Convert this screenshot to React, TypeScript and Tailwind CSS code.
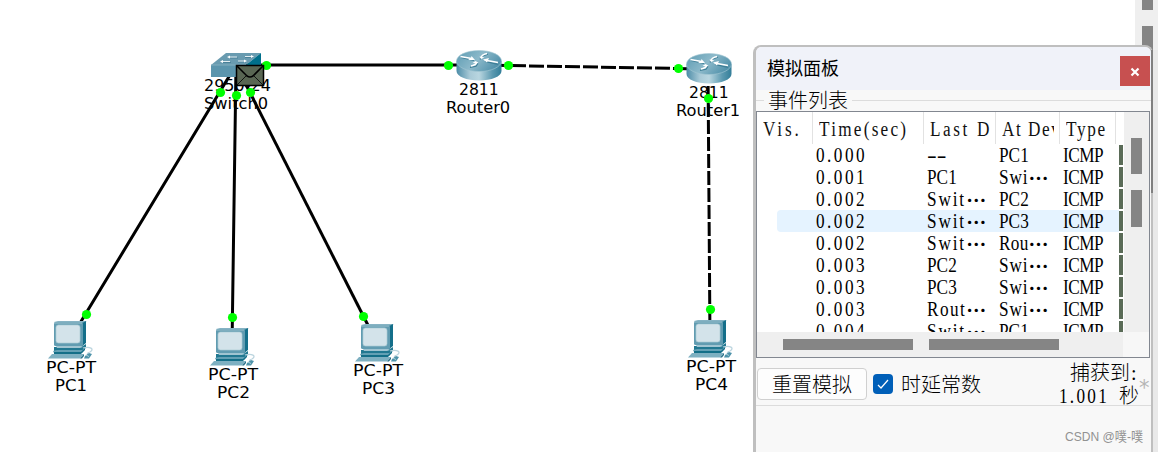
import { useLayoutEffect, useRef, useState } from "react";

/** Text squeezed or stretched horizontally so that it takes exactly `w` pixels. */
function Fit({ text, w, className = "" }: { text: string; w: number; className?: string }) {
  const ref = useRef<HTMLSpanElement>(null);
  const [scale, setScale] = useState(1);
  useLayoutEffect(() => {
    if (ref.current) setScale(w / ref.current.offsetWidth);
  }, [text, w]);
  return (
    <span className={`inline-block whitespace-pre text-left ${className}`} style={{ width: w }}>
      <span ref={ref} className="inline-block origin-left" style={{ transform: `scaleX(${scale})` }}>
        {text}
      </span>
    </span>
  );
}

const NARROW = 0.86;

/** Narrow serif text, letter-spaced so that it takes `w` pixels. */
function Spaced({ text, w }: { text: string; w: number }) {
  const ref = useRef<HTMLSpanElement>(null);
  const [spacing, setSpacing] = useState(0);
  useLayoutEffect(() => {
    if (!ref.current) return;
    ref.current.style.letterSpacing = "0px";
    const next = (w / NARROW - ref.current.offsetWidth) / text.length;
    ref.current.style.letterSpacing = `${next}px`;
    setSpacing(next);
  }, [text, w]);
  return (
    <span className="inline-block whitespace-pre text-left" style={{ width: w }}>
      <span
        ref={ref}
        className="inline-block origin-left"
        style={{ transform: `scaleX(${NARROW})`, letterSpacing: spacing }}
      >
        {text}
      </span>
    </span>
  );
}

function Router() {
  return (
    <svg width="46" height="32" viewBox="0 0 46 32" className="block">
      <defs>
        <linearGradient id="side" x1="0" x2="1">
          <stop offset="0" stopColor="#4d8da8" />
          <stop offset=".3" stopColor="#a9cad7" />
          <stop offset=".5" stopColor="#b9d6e0" />
          <stop offset=".8" stopColor="#5b99b0" />
          <stop offset="1" stopColor="#337e99" />
        </linearGradient>
        <linearGradient id="top" x1="0" x2="1" y2=".4">
          <stop offset="0" stopColor="#5d9bb2" />
          <stop offset=".55" stopColor="#8cb9ca" />
          <stop offset="1" stopColor="#5594ad" />
        </linearGradient>
      </defs>
      <path d="M.5 11v10c0 5.500 10 9.500 22.500 9.500s22.500-4 22.500-9.500V11z" fill="url(#side)" />
      <ellipse cx="23" cy="11" rx="22.500" ry="10.500" fill="url(#top)" stroke="#a5c8d4" strokeWidth=".6" />
      <g fill="none" stroke="#3f7f97" strokeWidth="1.200" transform="translate(0 1.300)">
        <path d="M5 6l13 3M42 13l-13-3M24 8l2-3 6-2M22 12l-2 3-6 1" />
      </g>
      <g fill="none" stroke="#fff" strokeWidth="1.700">
        <path d="M4.500 6.500l11 2M42 12.500l-11-2M25 7.500q1-3 6-4M21 12q-1 3-6 4" />
      </g>
      <path d="M12 10h7l-3.500-4-.5 2zM33 8l-6 1.500 4 3zM23.500 6.500l1.500 2.500 3.500-1.500zM22.500 13l-3-2-3 2z" fill="#fff" />
    </svg>
  );
}

function Switch() {
  return (
    <svg width="50" height="24" viewBox="0 0 50 24" className="block">
      <path d="M0 12L15 0h35L35 12z" fill="#699bb0" />
      <path d="M0 12h35v12H0z" fill="#5b95ad" />
      <path d="M35 12L50 0v12L35 24z" fill="#006f8b" />
      <path d="M0 12h35" stroke="#83afc0" strokeWidth="1" />
      <g stroke="#4a8198" strokeWidth="1" fill="none">
        <path d="M19 5h8M34 4.500h8M12 9.500h8M27 9h8" />
      </g>
      <g stroke="#e3eef2" strokeWidth="1.100" fill="none">
        <path d="M19 4h7M34 3.500h7M12 8.500h7M27 8h7" />
      </g>
      <path d="M16 4l3-1.500v3zM43 3.500L40 2v3zM9 8.500L12 7v3zM36 8l-3-1.500v3z" fill="#fff" />
    </svg>
  );
}

function Computer() {
  return (
    <svg width="46" height="38" viewBox="0 0 46 38" className="block">
      <path d="M6 1L10 0h29l-4 2z" fill="#86b3c4" />
      <path d="M34 2l4-2v22l-5 4z" fill="#146f8a" />
      <rect x="6" y="1" width="29" height="24" rx="1.500" fill="#619cb1" />
      <path d="M6 2h28" stroke="#9bc0cd" />
      <rect x="8" y="4" width="24" height="18" rx="2.500" fill="#d3e3ea" stroke="#adcbd6" strokeWidth=".7" />
      <path d="M6 26h27l5-3v4l-5 3H6z" fill="#217891" />
      <path d="M8 25h25l2 1-3 1H9z" fill="#a0c4d1" />
      <path d="M5 30l4-1h25l3-1-3 4H6z" fill="#63a0b4" />
      <path d="M6 31h27l4-4v2l-4 4H6z" fill="#146f88" />
      <path d="M4 33h32l-4 4.500H0z" fill="#7eb0c1" />
      <path d="M32 37.500l4-4.500v2l-2 2.500z" fill="#276f88" />
      <path d="M35 27c7-2 12 1 7 4-3 1-3 2-2 3" fill="none" stroke="#bcd5df" strokeWidth="1.300" />
      <path d="M37 35l4-3 3 1-3 4.500h-5z" fill="#4e93aa" />
      <path d="M38 34l3 1.500" stroke="#c7dfe5" strokeWidth=".8" />
    </svg>
  );
}

const LABEL = "font-['DejaVu_Sans'] text-[16px] leading-[18px] text-black";

const computers = [
  { name: "PC1", x: 48, y: 321, lx: 46, ly: 359, w: 32 },
  { name: "PC2", x: 210, y: 328, lx: 208, ly: 366, w: 33 },
  { name: "PC3", x: 355, y: 324, lx: 353, ly: 362, w: 33 },
  { name: "PC4", x: 688, y: 320, lx: 686, ly: 358, w: 33 },
];

const ports = [
  [266, 65], [448, 65], [508, 65], [678, 68], [708, 98], [710, 309],
  [220, 92], [236, 95], [250, 92], [86, 314], [232, 317], [363, 316],
];

function Topology() {
  return (
    <div className="relative h-full w-[753px] shrink-0">
      <svg className="absolute inset-0" width="753" height="452" stroke="#000" strokeWidth="3" fill="none">
        <path d="M236 65H478M236 65L68 343M236 65L232 347" />
        <path d="M236 65L377 343" />
        <path d="M478 65L709 69" strokeDasharray="15 3" strokeDashoffset="3" />
        <path d="M708 69L710 340" strokeDasharray="14 3" />
      </svg>
      <div className="absolute left-[211px] top-[53px]"><Switch /></div>
      <div className="absolute left-[456px] top-[50px]"><Router /></div>
      <div className="absolute left-[686px] top-[53px]"><Router /></div>
      {computers.map((c) => (
        <div key={c.name} className="absolute" style={{ left: c.x, top: c.y }}><Computer /></div>
      ))}
      <div className={`absolute left-[204px] top-[77px] flex flex-col items-start ${LABEL}`}>
        <Fit text="2950-24" w={67} />
        <Fit text="Switch0" w={64} />
      </div>
      <div className={`absolute left-[446px] top-[81px] flex flex-col items-center ${LABEL}`}>
        <Fit text="2811" w={40} className="ml-px" />
        <Fit text="Router0" w={64} />
      </div>
      <div className={`absolute left-[676px] top-[84px] flex flex-col items-center ${LABEL}`}>
        <Fit text="2811" w={40} className="ml-px" />
        <Fit text="Router1" w={64} />
      </div>
      {computers.map((c) => (
        <div key={c.name} className={`absolute flex flex-col items-center ${LABEL}`} style={{ left: c.lx, top: c.ly }}>
          <Fit text="PC-PT" w={50} />
          <Fit text={c.name} w={c.w} />
        </div>
      ))}
      <svg className="absolute inset-0" width="753" height="452">
        {ports.map(([x, y]) => <circle key={`${x}-${y}`} cx={x + 0.5} cy={y + 0.5} r="4.600" fill="#00ff00" />)}
        <rect x="236.500" y="65.500" width="27" height="20" fill="#596653" stroke="#000" strokeWidth="1.500" />
        <path d="M237 66l10 10q3 2 6 0l10-10" fill="none" stroke="#000" strokeWidth="1.600" />
        <path d="M237 85l9-9M263 85l-9-9" fill="none" stroke="#000" strokeWidth=".8" />
      </svg>
    </div>
  );
}

const SONG = "font-['Liberation_Serif','Noto_Sans_CJK_SC',serif] text-[20px]";

const events = [
  ["0.000", "--", "PC1"],
  ["0.001", "PC1", "Swi…"],
  ["0.002", "Swit…", "PC2"],
  ["0.002", "Swit…", "PC3"],
  ["0.002", "Swit…", "Rou…"],
  ["0.003", "PC2", "Swi…"],
  ["0.003", "PC3", "Swi…"],
  ["0.003", "Rout…", "Swi…"],
  ["0.004", "Swit…", "PC1"],
];

function Cell({ text }: { text: string }) {
  if (text === "--") return <Fit text={text} w={19} />;
  const body = text.replace("…", "");
  return (
    <span className="flex">
      <Spaced text={body} w={body.length * 9.8} />
      {text.endsWith("…") && <span className="font-['Noto_Sans_CJK_SC'] font-bold">…</span>}
    </span>
  );
}

function EventList() {
  return (
    <div className={`flex h-[247px] w-[394px] flex-col border border-[#828790] bg-white ${SONG}`}>
      <div className="flex h-[220px]">
        <div className="h-full w-[367px] overflow-hidden">
          <div className="flex h-8 items-center leading-[34px] text-[#111]">
            <div className="h-full w-14 border-r border-[#e2e2e2] pl-[6px]"><Spaced text="Vis." w={39} /></div>
            <div className="h-full w-[111px] border-r border-[#e2e2e2] pl-[6px]"><Spaced text="Time(sec)" w={89} /></div>
            <div className="h-full w-[72px] border-r border-[#e2e2e2] pl-[6px]"><Spaced text="Last D" w={62} /></div>
            <div className="h-full w-16 border-r border-[#e2e2e2] pl-[6px]">
              <div className="w-[52px] overflow-hidden"><Spaced text="At Dev" w={59} /></div>
            </div>
            <div className="h-full w-14 border-r border-[#e2e2e2] pl-[6px]"><Spaced text="Type" w={41} /></div>
          </div>
          {events.map(([time, last, at], i) => (
            <div key={i} className="flex h-[22px] pl-5 leading-[23px] text-black">
              <div className={`flex w-[342px] shrink-0 ${i === 3 ? "rounded-l-sm bg-[#e5f3ff]" : ""}`}>
                <div className="w-[111px] pl-[39px]"><Spaced text={time} w={51} /></div>
                <div className="w-[72px] pl-[39px]"><Cell text={last} /></div>
                <div className="w-[64px] pl-[39px]"><Cell text={at} /></div>
                <div className="w-[95px] pl-[39px]"><Spaced text="ICMP" w={40} /></div>
              </div>
              <div className="my-px w-1 shrink-0 bg-[#5a6b57]" />
            </div>
          ))}
        </div>
        <div className="flex w-[25px] flex-col items-center gap-4 bg-[#efefef] pt-[26px]">
          <div className="h-9 w-[11px] bg-[#858585]" />
          <div className="h-[37px] w-[11px] bg-[#858585]" />
        </div>
      </div>
      <div className="flex h-[25px]">
        <div className="flex w-[366px] gap-4 bg-[#efefef] pl-[26px] pt-[7px]">
          <div className="h-[11px] w-[130px] bg-[#858585]" />
          <div className="h-[11px] w-[130px] bg-[#858585]" />
        </div>
        <div className="flex-1 bg-[#f7f7f7]" />
      </div>
    </div>
  );
}

function SimulationPanel() {
  return (
    <div className="relative mt-[45px] h-[407px] w-[400px] shrink-0 overflow-hidden rounded-t-lg border-2 border-b-0 border-l-[3px] border-[#bfbfbf] bg-[#f8f8f8]">
      <div className="flex h-[43px] justify-between bg-[#f0f2f9]">
        <div className="pl-[11px] font-['Noto_Sans_CJK_SC'] text-[18px] leading-[40px] text-black">模拟面板</div>
        <div className="mr-px mt-[9px] flex h-[30px] w-[30px] items-center justify-center bg-[#c75050]">
          <svg width="10" height="10" viewBox="0 0 10 10" className="mt-px">
            <path d="M1.500 1.500l7 7M8.500 1.500l-7 7" stroke="#fff" strokeWidth="2.200" />
          </svg>
        </div>
      </div>
      <div className={`flex h-[21px] items-center ${SONG}`}>
        <div className="h-px w-2 bg-[#dcdcdc]" />
        <div className="ml-1 mr-[4px] w-20 pt-px text-[20px] font-light leading-[21px] text-black">事件列表</div>
        <div className="h-px flex-1 bg-[#dcdcdc]" />
      </div>
      <EventList />
      <div className="flex h-[48px] border-b border-[#dcdcdc]">
        <div className="ml-px mt-[10px] flex h-8 w-[110px] items-center justify-center rounded border border-[#d0d0d0] bg-[#fdfdfd] font-['Noto_Sans_CJK_SC'] text-[20px] font-light text-black">
          重置模拟
        </div>
        <div className="ml-[6px] mt-4 h-5 w-5 rounded bg-[#005fb8]">
          <svg width="20" height="20" viewBox="0 0 20 20"><path d="M5 11l3 3 7-8" fill="none" stroke="#fff" strokeWidth="1.200" /></svg>
        </div>
        <div className="ml-2 mt-[11px] h-[30px] font-['Noto_Sans_CJK_SC'] text-[20px] font-light leading-[30px] text-black">时延常数</div>
        <div className={`ml-auto mt-1 flex w-[80px] flex-col items-end font-light leading-[23px] text-black ${SONG}`}>
          <div className="pr-[2px]">捕获到<Fit text=":" w={6} className="ml-px" /></div>
          <div className="flex whitespace-pre"><Spaced text="1.001" w={50} /><span className="ml-[10px]">秒</span></div>
        </div>
        <div className="mt-[20px] w-3 font-['DejaVu_Sans'] text-[21px] leading-[21px] text-[#b5b5b5]">*</div>
      </div>
      <div className="mr-[8px] mt-[21px] text-right font-['Liberation_Sans','Noto_Sans_CJK_SC',sans-serif] text-[13px] leading-5 text-[#929292]">
        <Fit text="CSDN @噗-噗" w={78} />
      </div>
    </div>
  );
}

export default function App() {
  return (
    <div className="relative flex h-[452px] w-[1158px] overflow-hidden bg-white">
      <div className="absolute right-0 top-0 flex h-full w-[23px] flex-col gap-4 bg-[#efefef] pl-[7px]">
        <div className="h-[10px] w-[11px] bg-[#858585]" />
        <div className="h-[167px] w-[11px] bg-[#858585]" />
      </div>
      <Topology />
      <SimulationPanel />
      <div className="absolute left-[1151px] top-[50px] h-[143px] w-[2px] bg-[#808080]" />
      <div className="absolute left-[1153px] top-[50px] h-[402px] w-[5px] bg-[#e9e9e9]" />
    </div>
  );
}
